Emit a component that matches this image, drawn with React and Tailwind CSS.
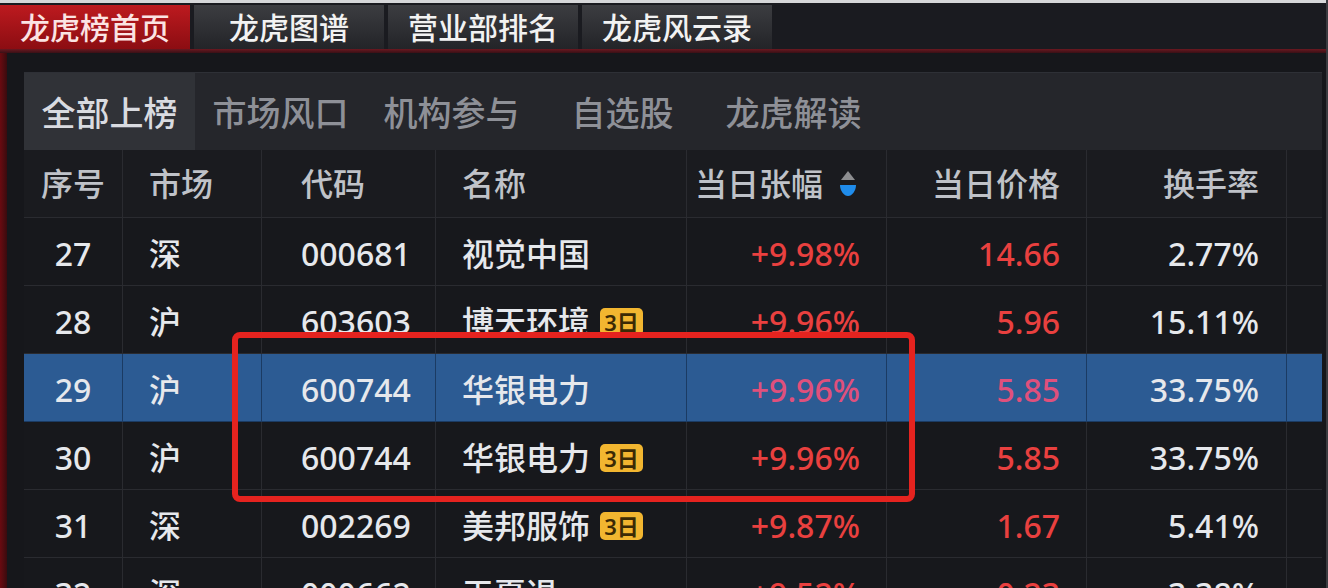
const topTabs = ["龙虎榜首页", "龙虎图谱", "营业部排名", "龙虎风云录"];
const subTabs = ["全部上榜", "市场风口", "机构参与", "自选股", "龙虎解读"];

const rows = [
  { no: "27", mkt: "深", code: "000681", name: "视觉中国", chg: "+9.98%", price: "14.66", turn: "2.77%" },
  { no: "28", mkt: "沪", code: "603603", name: "博天环境", badge: true, chg: "+9.96%", price: "5.96", turn: "15.11%" },
  { no: "29", mkt: "沪", code: "600744", name: "华银电力", chg: "+9.96%", price: "5.85", turn: "33.75%", selected: true },
  { no: "30", mkt: "沪", code: "600744", name: "华银电力", badge: true, chg: "+9.96%", price: "5.85", turn: "33.75%" },
  { no: "31", mkt: "深", code: "002269", name: "美邦服饰", badge: true, chg: "+9.87%", price: "1.67", turn: "5.41%" },
  { no: "32", mkt: "深", code: "000662", name: "天夏退", chg: "+9.52%", price: "0.23", turn: "3.38%" },
];

const cols = "grid grid-cols-[99px_139px_174px_251px_200px_200px_200px_1fr]";

function SortIcon() {
  return (
    <svg width="18" height="28" viewBox="0 0 18 28" className="ml-[16px]">
      <path d="M9 1 L16 10 H2 Z" fill="#8d8e90" strokeLinejoin="round" />
      <path d="M1 15 H17 C17 21 13 26 9 26 C5 26 1 21 1 15 Z" fill="#1f8ceb" />
    </svg>
  );
}

function Badge() {
  return (
    <span className="ml-[10px] inline-flex h-[28px] w-[43px] items-center justify-center rounded-[5px] bg-[#f2b630] text-[22px] font-semibold leading-none text-[#3b2a05]">
      3日
    </span>
  );
}

function Row({ r }) {
  const bg = r.selected ? "bg-[#2c5b93]" : "bg-[#17181c]";
  const line = r.selected ? "border-[#1b3b63]" : "border-[#2a2b30]";
  const red = r.selected ? "text-[#e0507c]" : "text-[#e9403f]";
  const cell = `flex items-center border-r border-b pt-[4px] ${line}`;
  return (
    <div className={`${cols} h-[68px] ${bg} text-[32px] font-medium leading-none text-[#e6e8ec]`}>
      <div className={`${cell} justify-center`}>{r.no}</div>
      <div className={`${cell} pl-[26px]`}>{r.mkt}</div>
      <div className={`${cell} pl-[39px]`}>{r.code}</div>
      <div className={`${cell} pl-[26px]`}>
        {r.name}
        {r.badge && <Badge />}
      </div>
      <div className={`${cell} justify-end pr-[26px] ${red}`}>{r.chg}</div>
      <div className={`${cell} justify-end pr-[26px] ${red}`}>{r.price}</div>
      <div className={`${cell} justify-end pr-[27px]`}>{r.turn}</div>
      <div className={`border-b ${line}`} />
    </div>
  );
}

export default function App() {
  return (
    <div className="relative h-[588px] w-[1328px] overflow-hidden bg-[#16171b] font-['Noto_Sans','Noto_Sans_CJK_SC',sans-serif]">
      {/* window edge */}
      <div className="h-[3px] bg-[#d6d7d9]" />

      {/* top tabs */}
      <div className="flex h-[46px] items-end gap-[4px] bg-[#1a1b20]">
        {topTabs.map((t, i) => (
          <div
            key={t}
            className={`flex h-[44px] w-[190px] items-center justify-center pt-[2px] text-[30px] font-medium leading-none ${
              i === 0
                ? "bg-gradient-to-b from-[#bd1a1f] to-[#8c0d12] text-[#fbe3e3]"
                : "bg-gradient-to-b from-[#3c3d41] to-[#232428] text-[#f2f2f2]"
            }`}
          >
            {t}
          </div>
        ))}
      </div>
      <div className="h-[4px] bg-gradient-to-b from-[#6b1820] to-[#3a1016]" />

      <div className="flex">
        {/* left red edge */}
        <div className="h-[540px] w-[7px] bg-gradient-to-r from-[#6a0a10] to-[#3a0a0e]" />
        <div className="w-[17px]" />

        <div className="mr-[6px] mt-[19px] flex-1">
          {/* sub tabs */}
          <div className="flex h-[78px] border-t border-[#2e3036] bg-[#25262b]">
            {subTabs.map((t, i) => (
              <div
                key={t}
                className={`flex w-[171px] items-center justify-center pt-[3px] text-[34px] font-medium leading-none ${
                  i === 0 ? "bg-[#303237] text-[#d9dbe0]" : "text-[#8e9097]"
                }`}
              >
                {t}
              </div>
            ))}
          </div>

          {/* header */}
          <div className={`${cols} h-[68px] bg-[#1a1b1f] text-[32px] font-medium leading-none text-[#bfc2c8]`}>
            <div className="flex items-center justify-center border-r border-b border-[#2a2b30]">序号</div>
            <div className="flex items-center border-r border-b border-[#2a2b30] pl-[26px]">市场</div>
            <div className="flex items-center border-r border-b border-[#2a2b30] pl-[39px]">代码</div>
            <div className="flex items-center border-r border-b border-[#2a2b30] pl-[26px]">名称</div>
            <div className="flex items-center justify-end border-r border-b border-[#2a2b30] pr-[29px]">
              当日张幅
              <SortIcon />
            </div>
            <div className="flex items-center justify-end border-r border-b border-[#2a2b30] pr-[26px]">当日价格</div>
            <div className="flex items-center justify-end border-r border-b border-[#2a2b30] pr-[27px]">换手率</div>
            <div className="border-b border-[#2a2b30]" />
          </div>

          {rows.map((r) => (
            <Row key={r.no} r={r} />
          ))}
        </div>
      </div>
      <div className="absolute right-0 top-0 h-full w-[2px] bg-[#3a3b40]" />

      {/* red annotation box */}
      <div className="absolute left-[232px] top-[332px] h-[170px] w-[683px] rounded-[8px] border-[6px] border-[#e5231f]" />
    </div>
  );
}
